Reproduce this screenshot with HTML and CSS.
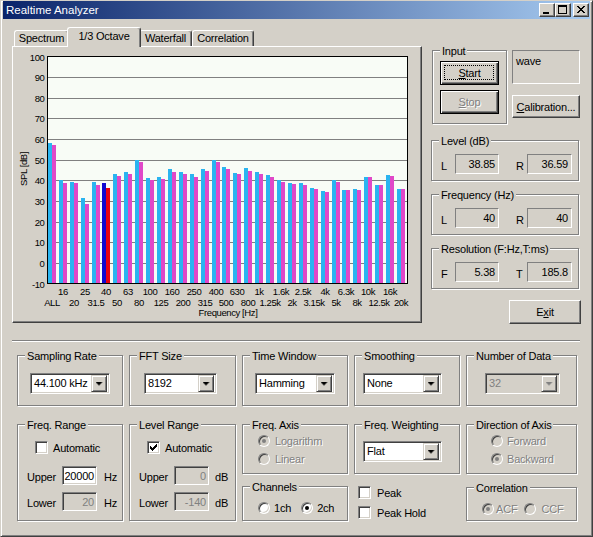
FILE: index.html
```
<!DOCTYPE html>
<html>
<head>
<meta charset="utf-8">
<title>Realtime Analyzer</title>
<link rel="stylesheet" href="styles.css">
</head>
<body>
<div class="window">
  <div class="titlebar">
    <span class="title">Realtime Analyzer</span>
    <div class="capbtns">
      <div class="capbtn"><svg width="14" height="12" viewBox="0 0 14 12" shape-rendering="crispEdges"><rect x="3" y="8" width="6" height="2"/></svg></div>
      <div class="capbtn"><svg width="14" height="12" viewBox="0 0 14 12" shape-rendering="crispEdges"><path d="M2 1h9v2h-9z M2 3h1v7h-1z M10 3h1v7h-1z M3 9h7v1h-7z"/></svg></div>
      <div class="capbtn close"><svg width="14" height="12" viewBox="0 0 14 12" shape-rendering="crispEdges"><path d="M3 2h2v1h-2z M9 2h2v1h-2z M4 3h2v1h-2z M8 3h2v1h-2z M5 4h4v1h-4z M6 5h2v1h-2z M5 6h4v1h-4z M4 7h2v1h-2z M8 7h2v1h-2z M3 8h2v1h-2z M9 8h2v1h-2z"/></svg></div>
    </div>
  </div>

  <div class="client">
    <div class="top">
      <div class="tabctl">
        <div class="tabs">
          <div class="tab t1">Spectrum</div>
          <div class="tab t2 sel">1/3 Octave</div>
          <div class="tab t3">Waterfall</div>
          <div class="tab t4">Correlation</div>
        </div>
        <div class="tabpanel">
          <svg class="chart" width="407" height="274" viewBox="13 47 407 274">
            <rect x="47" y="57" width="360" height="227" fill="#f8fcf6"/>
            <g stroke="#808080" shape-rendering="crispEdges">
              <line x1="48" x2="407" y1="77.5" y2="77.5"/>
              <line x1="48" x2="407" y1="98.5" y2="98.5"/>
              <line x1="48" x2="407" y1="118.5" y2="118.5"/>
              <line x1="48" x2="407" y1="139.5" y2="139.5"/>
              <line x1="48" x2="407" y1="160.5" y2="160.5"/>
              <line x1="48" x2="407" y1="180.5" y2="180.5"/>
              <line x1="48" x2="407" y1="201.5" y2="201.5"/>
              <line x1="48" x2="407" y1="222.5" y2="222.5"/>
              <line x1="48" x2="407" y1="242.5" y2="242.5"/>
              <line x1="48" x2="407" y1="263.5" y2="263.5"/>
            </g>
            <g transform="matrix(1 0 0 -2.0636 0 263.36)" shape-rendering="crispEdges">
              <g fill="#2ab4f0">
                <rect x="48" y="-10" width="4" height="68.5"/>
                <rect x="59" y="-10" width="4" height="50.4"/>
                <rect x="70" y="-10" width="4" height="49.6"/>
                <rect x="81" y="-10" width="4" height="41.9"/>
                <rect x="92" y="-10" width="4" height="49.5"/>
                <rect x="113" y="-10" width="4" height="53.5"/>
                <rect x="124" y="-10" width="4" height="54.5"/>
                <rect x="135" y="-10" width="4" height="60"/>
                <rect x="146" y="-10" width="4" height="51.4"/>
                <rect x="157" y="-10" width="4" height="51.9"/>
                <rect x="168" y="-10" width="4" height="55.8"/>
                <rect x="179" y="-10" width="4" height="54.5"/>
                <rect x="190" y="-10" width="4" height="53.5"/>
                <rect x="201" y="-10" width="4" height="55.8"/>
                <rect x="212" y="-10" width="4" height="60.1"/>
                <rect x="222" y="-10" width="4" height="56.7"/>
                <rect x="233" y="-10" width="4" height="53.8"/>
                <rect x="244" y="-10" width="4" height="56.2"/>
                <rect x="255" y="-10" width="4" height="54.3"/>
                <rect x="266" y="-10" width="4" height="52.9"/>
                <rect x="277" y="-10" width="4" height="50.4"/>
                <rect x="288" y="-10" width="4" height="49"/>
                <rect x="299" y="-10" width="4" height="49"/>
                <rect x="310" y="-10" width="4" height="46.6"/>
                <rect x="321" y="-10" width="4" height="45.1"/>
                <rect x="332" y="-10" width="4" height="50.4"/>
                <rect x="342" y="-10" width="4" height="45.6"/>
                <rect x="353" y="-10" width="4" height="46.1"/>
                <rect x="364" y="-10" width="4" height="51.9"/>
                <rect x="375" y="-10" width="4" height="48"/>
                <rect x="386" y="-10" width="4" height="52.9"/>
                <rect x="397" y="-10" width="4" height="46.1"/>
              </g>
              <g fill="#e048c8">
                <rect x="52" y="-10" width="4" height="67.4"/>
                <rect x="63" y="-10" width="4" height="49.1"/>
                <rect x="74" y="-10" width="4" height="49.1"/>
                <rect x="85" y="-10" width="4" height="38.8"/>
                <rect x="96" y="-10" width="4" height="48.2"/>
                <rect x="117" y="-10" width="4" height="52.4"/>
                <rect x="128" y="-10" width="4" height="53.5"/>
                <rect x="139" y="-10" width="4" height="59.3"/>
                <rect x="150" y="-10" width="4" height="50.4"/>
                <rect x="161" y="-10" width="4" height="50.9"/>
                <rect x="172" y="-10" width="4" height="54.5"/>
                <rect x="183" y="-10" width="4" height="53.5"/>
                <rect x="194" y="-10" width="4" height="51.9"/>
                <rect x="205" y="-10" width="4" height="54.8"/>
                <rect x="216" y="-10" width="4" height="59.3"/>
                <rect x="226" y="-10" width="4" height="55.8"/>
                <rect x="237" y="-10" width="4" height="53.3"/>
                <rect x="248" y="-10" width="4" height="54.8"/>
                <rect x="259" y="-10" width="4" height="53.3"/>
                <rect x="270" y="-10" width="4" height="51.9"/>
                <rect x="281" y="-10" width="4" height="49.6"/>
                <rect x="292" y="-10" width="4" height="48.5"/>
                <rect x="303" y="-10" width="4" height="48"/>
                <rect x="314" y="-10" width="4" height="46.1"/>
                <rect x="325" y="-10" width="4" height="44.6"/>
                <rect x="336" y="-10" width="4" height="49.5"/>
                <rect x="346" y="-10" width="4" height="45.6"/>
                <rect x="357" y="-10" width="4" height="45.6"/>
                <rect x="368" y="-10" width="4" height="51.9"/>
                <rect x="379" y="-10" width="4" height="48"/>
                <rect x="390" y="-10" width="4" height="52.4"/>
                <rect x="401" y="-10" width="4" height="46.1"/>
              </g>
              <rect x="102" y="-10" width="4" height="48.85" fill="#1008d0"/>
              <rect x="106" y="-10" width="4" height="46.59" fill="#e80010"/>
            </g>
            <rect x="47.5" y="56.5" width="360" height="227" fill="none" stroke="#000" shape-rendering="crispEdges"/>
            <g text-anchor="end">
              <text x="44.5" y="60.5">100</text>
              <text x="44.5" y="81">90</text>
              <text x="44.5" y="102">80</text>
              <text x="44.5" y="122">70</text>
              <text x="44.5" y="143">60</text>
              <text x="44.5" y="164">50</text>
              <text x="44.5" y="184">40</text>
              <text x="44.5" y="205">30</text>
              <text x="44.5" y="226">20</text>
              <text x="44.5" y="246">10</text>
              <text x="44.5" y="267">0</text>
              <text x="44.5" y="287.5">-10</text>
            </g>
            <text x="23" y="169" text-anchor="middle" transform="rotate(-90 23 169)" dy="3.5">SPL [dB]</text>
            <g text-anchor="middle">
              <text x="63" y="295">16</text>
              <text x="85" y="295">25</text>
              <text x="106" y="295">40</text>
              <text x="128" y="295">63</text>
              <text x="150" y="295">100</text>
              <text x="172" y="295">160</text>
              <text x="194" y="295">250</text>
              <text x="216" y="295">400</text>
              <text x="237" y="295">630</text>
              <text x="259" y="295">1k</text>
              <text x="281" y="295">1.6k</text>
              <text x="303" y="295">2.5k</text>
              <text x="325" y="295">4k</text>
              <text x="346" y="295">6.3k</text>
              <text x="368" y="295">10k</text>
              <text x="390" y="295">16k</text>

              <text x="52" y="306">ALL</text>
              <text x="74" y="306">20</text>
              <text x="96" y="306">31.5</text>
              <text x="117" y="306">50</text>
              <text x="139" y="306">80</text>
              <text x="161" y="306">125</text>
              <text x="183" y="306">200</text>
              <text x="205" y="306">315</text>
              <text x="226" y="306">500</text>
              <text x="248" y="306">800</text>
              <text x="270" y="306">1.25k</text>
              <text x="292" y="306">2k</text>
              <text x="314" y="306">3.15k</text>
              <text x="336" y="306">5k</text>
              <text x="357" y="306">8k</text>
              <text x="379" y="306">12.5k</text>
              <text x="401" y="306">20k</text>

              <text x="228" y="315.5">Frequency [Hz]</text>
            </g>
          </svg>
        </div>
      </div>

      <div class="side">
        <div class="inrow">
          <div class="group g-input">
            <span class="legend">Input</span>
            <div class="btn def start"><span><u>S</u>tart</span></div>
            <div class="btn def stop"><span class="dis-t"><u>S</u>top</span></div>
          </div>
          <div class="incol">
            <div class="static wave">wave</div>
            <div class="btn calib"><span><u>C</u>alibration...</span></div>
          </div>
        </div>
        <div class="group vgroup">
          <span class="legend">Level (dB)</span>
          <div class="vrow"><span class="vl">L</span><span class="static val">38.85</span><span class="vl vr">R</span><span class="static val val2">36.59</span></div>
        </div>
        <div class="group vgroup">
          <span class="legend">Frequency (Hz)</span>
          <div class="vrow"><span class="vl">L</span><span class="static val">40</span><span class="vl vr">R</span><span class="static val val2">40</span></div>
        </div>
        <div class="group vgroup">
          <span class="legend">Resolution (F:Hz,T:ms)</span>
          <div class="vrow"><span class="vl">F</span><span class="static val">5.38</span><span class="vl vr">T</span><span class="static val val2">185.8</span></div>
        </div>
        <div class="btn exit"><span>E<u>x</u>it</span></div>
      </div>
    </div>

    <div class="sep"></div>

    <div class="settings">
      <div class="group g-rate">
        <span class="legend">Sampling Rate</span>
        <div class="combo w80"><span class="cv">44.100 kHz</span><span class="dd"></span></div>
      </div>
      <div class="group g-fft">
        <span class="legend">FFT Size</span>
        <div class="combo w73"><span class="cv">8192</span><span class="dd"></span></div>
      </div>
      <div class="group g-time">
        <span class="legend">Time Window</span>
        <div class="combo w80"><span class="cv">Hamming</span><span class="dd"></span></div>
      </div>
      <div class="group g-smooth">
        <span class="legend">Smoothing</span>
        <div class="combo w79"><span class="cv">None</span><span class="dd"></span></div>
      </div>
      <div class="group g-ndata">
        <span class="legend">Number of Data</span>
        <div class="combo w75 disabled"><span class="cv">32</span><span class="dd"></span></div>
      </div>

      <div class="group g-range">
        <span class="legend">Freq. Range</span>
        <div class="ckrow"><span class="chk"></span><span class="ckt">Automatic</span></div>
        <div class="erow first"><span class="el">Upper</span><span class="edit">20000</span><span class="eu">Hz</span></div>
        <div class="erow"><span class="el">Lower</span><span class="edit disabled">20</span><span class="eu">Hz</span></div>
      </div>
      <div class="group g-range">
        <span class="legend">Level Range</span>
        <div class="ckrow"><span class="chk"><svg width="7" height="7" viewBox="0 0 7 7" shape-rendering="crispEdges"><path d="M0 2h1v1h1v1h1v-1h1v-1h1v-1h1v-1h1v3h-1v1h-1v1h-1v1h-1v1h-1v-1h-1v-1h-1z"/></svg></span><span class="ckt">Automatic</span></div>
        <div class="erow first"><span class="el">Upper</span><span class="edit disabled">0</span><span class="eu du">dB</span></div>
        <div class="erow"><span class="el">Lower</span><span class="edit disabled">-140</span><span class="eu du">dB</span></div>
      </div>
      <div class="col">
        <div class="group g-axis">
          <span class="legend">Freq. Axis</span>
          <div class="opt"><span class="radio dis on"></span><span class="ot dis-t">Logarithm</span></div>
          <div class="opt"><span class="radio dis"></span><span class="ot dis-t">Linear</span></div>
        </div>
        <div class="group g-ch">
          <span class="legend">Channels</span>
          <div class="opt"><span class="radio"></span><span class="ot">1ch</span><span class="radio on r2"></span><span class="ot">2ch</span></div>
        </div>
      </div>
      <div class="col">
        <div class="group g-weight">
          <span class="legend">Freq. Weighting</span>
          <div class="combo w79"><span class="cv">Flat</span><span class="dd"></span></div>
        </div>
        <div class="ckrow peak first"><span class="chk"></span><span class="ckt pk">Peak</span></div>
        <div class="ckrow peak"><span class="chk"></span><span class="ckt pk">Peak Hold</span></div>
      </div>
      <div class="col">
        <div class="group g-dir">
          <span class="legend">Direction of Axis</span>
          <div class="opt"><span class="radio dis"></span><span class="ot dis-t">Forward</span></div>
          <div class="opt"><span class="radio dis on"></span><span class="ot dis-t">Backward</span></div>
        </div>
        <div class="group g-corr">
          <span class="legend">Correlation</span>
          <div class="opt"><span class="radio dis on"></span><span class="ot acf dis-t">ACF</span><span class="radio dis r3"></span><span class="ot ccf dis-t">CCF</span></div>
        </div>
      </div>
    </div>
  </div>
</div>
</body>
</html>
```

FILE: styles.css
```
* { box-sizing: border-box; }
html, body { margin: 0; padding: 0; background: #d4d0c8; }
body {
  font-family: "Liberation Sans", Arial, sans-serif;
  font-size: 11px;
  letter-spacing: -0.2px;
  color: #000;
}
u { text-decoration: underline; text-underline-offset: 1px; }

.window {
  width: 593px;
  height: 537px;
  border: 1px solid;
  border-color: #d4d0c8 #404040 #404040 #d4d0c8;
  box-shadow: inset 1px 1px #fff, inset -1px -1px #808080;
  padding: 0 2px 2px 2px;
  background: #d4d0c8;
  display: flex;
  flex-direction: column;
}

/* title bar */
.titlebar {
  height: 18px;
  flex: none;
  display: flex;
  align-items: center;
  background: linear-gradient(to right, #0a246a, #a6caf0);
  color: #fff;
  padding-left: 3px;
}
.title { font-size: 11.5px; letter-spacing: 0; }
.capbtns { margin-left: auto; align-self: flex-start; margin-top: 2px; margin-right: 1px; display: flex; }
.capbtn {
  width: 16px; height: 14px;
  background: #d4d0c8;
  border: 1px solid;
  border-color: #fff #404040 #404040 #fff;
  box-shadow: inset -1px -1px #808080;
}
.capbtn svg { display: block; }
.capbtn.close { margin-left: 2px; }

.client { flex: 1; display: flex; flex-direction: column; }
.top { display: flex; align-items: flex-start; }

/* tabs */
.tabctl { margin: 8px 0 0 9px; width: 410px; }
.tabs { display: flex; align-items: flex-end; height: 19px; padding-left: 2px; }
.tab {
  height: 16px;
  border: 1px solid;
  border-bottom: 0;
  border-color: #fff #404040 #404040 #fff;
  box-shadow: inset -1px 0 #808080;
  border-radius: 3px 3px 0 0;
  text-align: center;
  line-height: 15px;
  white-space: nowrap;
  background: #d4d0c8;
}
.t1 { width: 55px; }
.t2 { width: 70px; }
.t3 { width: 53px; }
.t4 { width: 62px; }
.tab.sel {
  position: relative;
  z-index: 1;
  height: 20px;
  width: 74px;
  margin: 0 -2px -1px -2px;
  padding-top: 1px;
}
.tabpanel {
  width: 410px;
  height: 277px;
  border: 1px solid;
  border-color: #fff #404040 #404040 #fff;
  box-shadow: inset -1px -1px #808080;
}
.chart { display: block; }
.chart text {
  font-family: "Liberation Sans", Arial, sans-serif;
  font-size: 9.5px;
  letter-spacing: -0.4px;
  fill: #000;
}

/* group boxes */
.group {
  position: relative;
  border: 1px solid #808080;
  box-shadow: inset 1px 1px #fff, 1px 1px #fff;
}
.legend {
  position: absolute;
  top: -6px;
  left: 7px;
  padding: 0 2px;
  background: #d4d0c8;
  line-height: 13px;
  white-space: nowrap;
}

/* buttons */
.btn {
  display: flex;
  align-items: center;
  justify-content: center;
  background: #d4d0c8;
  border: 1px solid;
  border-color: #fff #404040 #404040 #fff;
  box-shadow: inset -1px -1px #808080;
  white-space: nowrap;
}
.btn.def {
  border-color: #000;
  box-shadow: inset 1px 1px #fff, inset -1px -1px #404040, inset -2px -2px #808080;
}
.dis-t { color: #808080; text-shadow: 1px 1px #fff; }

/* side panel */
.side { margin: 31px 0 0 9px; width: 150px; }
.inrow { display: flex; }
.g-input { margin-left: 1px; width: 75px; height: 74px; padding: 10px 0 0 7px; }
.g-input .btn { width: 59px; height: 24px; }
.start { position: relative; }
.start::after {
  content: "";
  position: absolute;
  left: 3px; top: 3px; right: 4px; bottom: 4px;
  border: 1px dotted #000;
}
.stop { margin-top: 5px; }
.incol { margin-left: 5px; width: 68px; }
.static {
  border: 1px solid;
  border-color: #808080 #fff #fff #808080;
}
.wave { height: 34px; padding: 4px 3px 0 3px; line-height: 13px; }
.calib { margin-top: 11px; height: 23px; }

.vgroup { width: 148px; height: 41px; margin-top: 13px; }
.inrow + .vgroup { margin-top: 16px; }
.vrow { display: flex; align-items: center; padding: 13px 0 0 9px; }
.vl { width: 14px; margin-top: 4px; }
.vr { margin-left: 17px; width: 11px; }
.val {
  width: 44px;
  height: 20px;
  display: flex;
  align-items: center;
  justify-content: flex-end;
  padding-right: 3px;
}
.val2 { width: 45px; }
.exit { margin: 11px 0 0 78px; width: 72px; height: 24px; }

/* separator */
.sep {
  margin: 16px 0 0 9px;
  width: 568px;
  height: 2px;
  border-top: 1px solid #808080;
  border-bottom: 1px solid #fff;
}

/* settings */
.settings {
  margin: 13px 0 0 14px;
  display: grid;
  grid-template-columns: 106px 107px 106px 106px 111px;
  grid-template-rows: 51px 97px;
  column-gap: 6px;
  row-gap: 18px;
}
.g-rate { padding: 17px 0 0 12px; }
.g-fft { padding: 17px 0 0 14px; }
.g-time { padding: 17px 0 0 12px; }
.g-smooth { padding: 17px 0 0 8px; }
.g-ndata { padding: 17px 0 0 18px; }

.combo {
  display: flex;
  align-items: center;
  height: 21px;
  border: 1px solid;
  border-color: #808080 #fff #fff #808080;
  box-shadow: inset 1px 1px #404040, inset -1px -1px #d4d0c8;
  background: #fff;
  padding: 2px;
}
.w80 { width: 80px; }
.w79 { width: 79px; }
.w75 { width: 75px; }
.w73 { width: 73px; }
.cv { flex: 1; padding-left: 1px; line-height: 15px; white-space: nowrap; }
.dd {
  width: 16px;
  height: 17px;
  flex: none;
  border: 1px solid;
  border-color: #d4d0c8 #404040 #404040 #d4d0c8;
  box-shadow: inset 1px 1px #fff, inset -1px -1px #808080;
  background: #d4d0c8;
  display: flex;
  align-items: center;
  justify-content: center;
}
.dd::after {
  content: "";
  width: 7px;
  height: 4px;
  background: #000;
  clip-path: polygon(0 0, 7px 0, 7px 1px, 6px 1px, 6px 2px, 5px 2px, 5px 3px, 4px 3px, 4px 4px, 3px 4px, 3px 3px, 2px 3px, 2px 2px, 1px 2px, 1px 1px, 0 1px);
}
.combo.disabled { background: #d4d0c8; }
.combo.disabled .cv { color: #808080; }
.combo.disabled .dd::after { background: #808080; }

/* checkboxes */
.chk {
  width: 13px;
  height: 13px;
  flex: none;
  border: 1px solid;
  border-color: #808080 #fff #fff #808080;
  box-shadow: inset 1px 1px #404040, inset -1px -1px #d4d0c8;
  background: #fff;
  display: flex;
  align-items: center;
  justify-content: center;
}
.chk svg { display: block; }
.ckrow { display: flex; align-items: center; height: 13px; }
.ckt { margin-left: 5px; white-space: nowrap; }

.g-range { padding: 16px 0 0 9px; }
.g-range .ckrow { margin-left: 8px; }
.erow { display: flex; align-items: center; margin-top: 7px; height: 19px; }
.erow.first { margin-top: 12px; }
.el { width: 35px; margin-top: 2px; }
.edit {
  width: 35px;
  height: 19px;
  border: 1px solid;
  border-color: #808080 #fff #fff #808080;
  box-shadow: inset 1px 1px #404040, inset -1px -1px #d4d0c8;
  background: #fff;
  display: flex;
  align-items: center;
  justify-content: flex-end;
  padding-right: 2px;
}
.edit.disabled { background: #d4d0c8; color: #808080; }
.eu { margin-left: 7px; margin-top: 2px; }
.eu.du { margin-left: 6px; }

/* radios */
.col { display: flex; flex-direction: column; }
.opt { display: flex; align-items: center; height: 12px; }
.opt + .opt { margin-top: 6px; }
.radio {
  width: 12px;
  height: 12px;
  flex: none;
  border-radius: 50%;
  border: 1px solid;
  border-color: #808080 #fff #fff #808080;
  box-shadow: inset 1px 1px #404040, inset -1px -1px #d4d0c8;
  background: #fff;
  display: flex;
  align-items: center;
  justify-content: center;
}
.radio.on::after {
  content: "";
  width: 4px;
  height: 4px;
  border-radius: 50%;
  background: #000;
}
.radio.dis { background: #d4d0c8; }
.radio.dis.on::after { background: #808080; }
.ot { margin-left: 5px; white-space: nowrap; }

.g-axis { height: 50px; padding: 10px 0 0 15px; }
.g-ch { margin-top: 12px; height: 35px; padding: 15px 0 0 15px; }
.g-ch .ot { margin-left: 4px; }
.g-ch .r2 { margin-left: 10px; }

.g-weight { height: 50px; padding: 16px 0 0 8px; }
.peak { margin-left: 4px; margin-top: 7px; }
.peak.first { margin-top: 12px; }
.pk { margin-left: 6px; }

.g-dir { height: 50px; padding: 10px 0 0 24px; }
.g-dir .ot { margin-left: 4px; }
.g-corr { margin-top: 13px; height: 34px; padding: 15px 0 0 15px; }
.g-corr .acf { margin-left: 2px; }
.g-corr .ccf { margin-left: 5px; }
.g-corr .r3 { margin-left: 7px; }
```
